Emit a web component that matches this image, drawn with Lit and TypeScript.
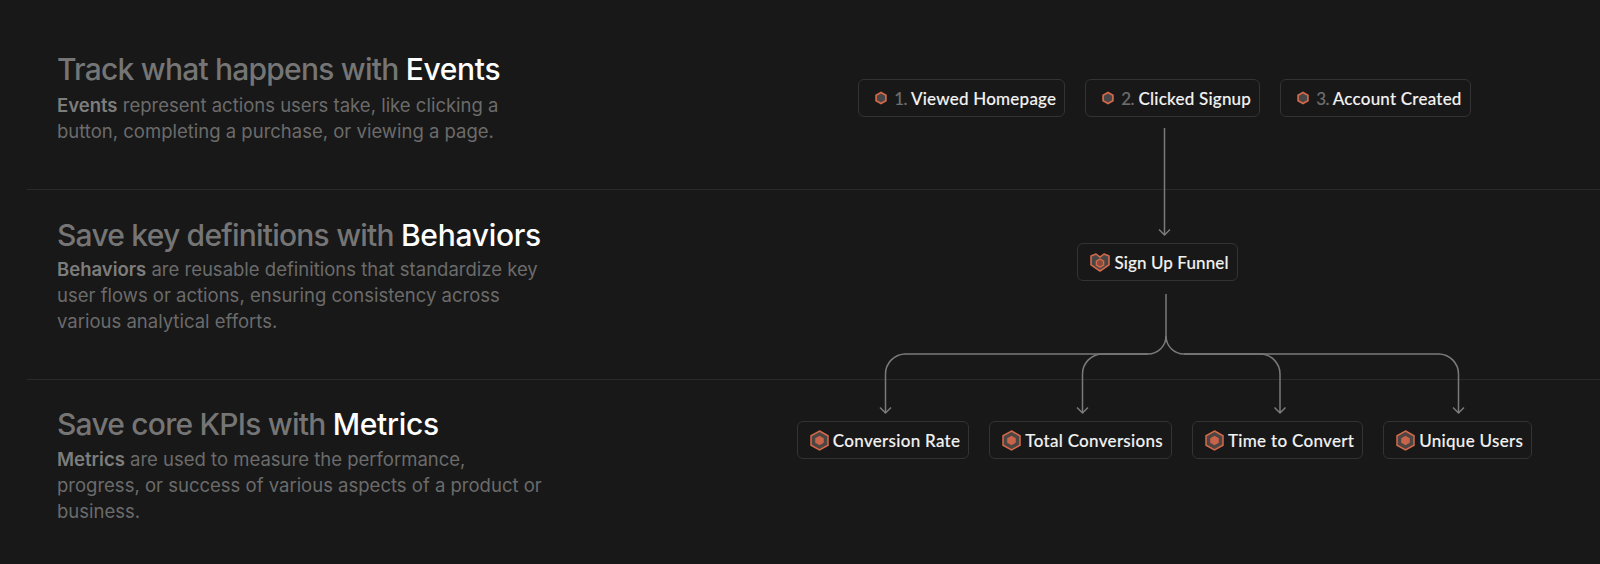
import { LitElement, html, css, svg } from "lit";
import { customElement } from "lit/decorators.js";

const hexSmall = html`<svg class="ic" width="12" height="14" viewBox="0 0 12 14" fill="none"><path d="M6 1.4 10.9 4.2V9.8L6 12.6 1.1 9.8V4.2Z" fill="#474747" stroke="#d4694a" stroke-width="1.7"/></svg>`;
const hexBig = html`<svg class="ic" width="19" height="21" viewBox="0 0 19 21" fill="none"><path d="M9.5 1 18 5.8V15.2L9.5 20 1 15.2V5.8Z" fill="#4d4541" stroke="#d4694a" stroke-width="1.5"/><path d="M9.5 5.8 13.8 8.2V12.8L9.5 15.2 5.2 12.8V8.2Z" fill="#c9634a"/></svg>`;
const shield = html`<svg class="ic" width="20" height="19" viewBox="0 0 20 19" fill="none"><path d="M1 3 6 1 10 4.2 14 1 19 3V11.8L10 18 1 11.8Z" fill="#474747" stroke="#d4694a" stroke-width="1.6" stroke-linejoin="round"/><path d="M10 6 13.6 8.1V12.1L10 14.2 6.4 12.1V8.1Z" fill="#8a4a3a" stroke="#d4694a" stroke-width="1.4"/></svg>`;

const curve = (d: string) => svg`<path d=${d} />`;

@customElement("app-root")
export class AppRoot extends LitElement {
  static styles = css`
    :host { display: block; width: 1600px; height: 564px; background: #181818; overflow: hidden; position: relative; font-family: "Inter", "Liberation Sans", sans-serif; }
    .row { display: grid; grid-template-columns: 702px 871px; margin-left: 27px; box-sizing: border-box; border-bottom: 1px solid #2a2a2a; height: 190px; }
    .row.last { border-bottom: 0; height: 184px; }
    .text { padding-left: 30px; }
    .r1 .text { padding-top: 49px; }
    .r2 .text { padding-top: 25px; }
    .r3 .text { padding-top: 24px; }
    h2 { margin: 0; font-size: 30px; line-height: 40px; font-weight: 550; color: #757575; letter-spacing: -0.78px; }
    .r1 h2 { margin-bottom: 3px; }
    .r2 h2 { margin-bottom: 1px; }
    .r3 h2 { margin-bottom: 2px; }
    h2 b { font-weight: 550; color: #fff; letter-spacing: -0.3px; }
    p { margin: 0; font-size: 18.5px; line-height: 26px; color: #6b6b6b; letter-spacing: 0; white-space: nowrap; }
    p b { font-weight: 600; color: #7d7d7d; }
    .chips { display: flex; justify-content: center; gap: 20px; align-items: flex-start; }
    .r1 .chips { padding-top: 79px; }
    .r2 .chips { padding-top: 53px; }
    .r3 .chips { padding-top: 41px; }
    .chip { display: flex; align-items: center; height: 38px; box-sizing: border-box; border: 1px solid #333; border-radius: 6px; background: #181818; color: #f2f2f2; font-family: "Lato", sans-serif; font-size: 17px; font-weight: 500; white-space: nowrap; letter-spacing: 0.3px; -webkit-text-stroke: 0.12px; }
    .chip .n { color: #6e6e6e; margin-right: 0; letter-spacing: -0.6px; }
    .c-ev { padding: 0 8px 0 16px; gap: 7px; letter-spacing: 0.22px; }
    .c-me { padding: 0 8px 0 12px; gap: 4px; }
    .c-be { margin-right: 14px; letter-spacing: 0.1px; }
    .ic { flex: none; }
    .lines { position: absolute; left: 0; top: 0; width: 1600px; height: 564px; pointer-events: none; }
    .lines path { fill: none; stroke: #7a7a7a; stroke-width: 1.5; }
  `;

  render() {
    return html`
      <div class="row r1">
        <div class="text">
          <h2>Track what happens with <b>Events</b></h2>
          <p><b>Events</b> represent actions users take, like clicking a<br />button, completing a purchase, or viewing a page.</p>
        </div>
        <div class="chips">
          <div class="chip c-ev">${hexSmall}<span><span class="n">1.</span> Viewed Homepage</span></div>
          <div class="chip c-ev">${hexSmall}<span><span class="n">2.</span> Clicked Signup</span></div>
          <div class="chip c-ev">${hexSmall}<span><span class="n">3.</span> Account Created</span></div>
        </div>
      </div>
      <div class="row r2">
        <div class="text">
          <h2>Save key definitions with <b>Behaviors</b></h2>
          <p><b>Behaviors</b> are reusable definitions that standardize key<br />user flows or actions, ensuring consistency across<br />various analytical efforts.</p>
        </div>
        <div class="chips">
          <div class="chip c-me c-be">${shield}<span>Sign Up Funnel</span></div>
        </div>
      </div>
      <div class="row r3 last">
        <div class="text">
          <h2>Save core KPIs with <b>Metrics</b></h2>
          <p><b>Metrics</b> are used to measure the performance,<br />progress, or success of various aspects of a product or<br />business.</p>
        </div>
        <div class="chips">
          <div class="chip c-me">${hexBig}<span>Conversion Rate</span></div>
          <div class="chip c-me">${hexBig}<span>Total Conversions</span></div>
          <div class="chip c-me">${hexBig}<span>Time to Convert</span></div>
          <div class="chip c-me">${hexBig}<span>Unique Users</span></div>
        </div>
      </div>
      <svg class="lines" viewBox="0 0 1600 564">
        ${curve("M1164.5 128V235M1159 229.5 1164.5 235 1170 229.5")}
        ${curve("M1166 294V336A18 18 0 0 1 1148 354H905.5A20 20 0 0 0 885.5 374V413M880 407.5 885.5 413 891 407.5")}
        ${curve("M1148 354H1102.5A20 20 0 0 0 1082.5 374V413M1077 407.5 1082.5 413 1088 407.5")}
        ${curve("M1166 336A18 18 0 0 0 1184 354H1260A20 20 0 0 1 1280 374V413M1274.5 407.5 1280 413 1285.5 407.5")}
        ${curve("M1184 354H1438.5A20 20 0 0 1 1458.5 374V413M1453 407.5 1458.5 413 1464 407.5")}
      </svg>
    `;
  }
}
